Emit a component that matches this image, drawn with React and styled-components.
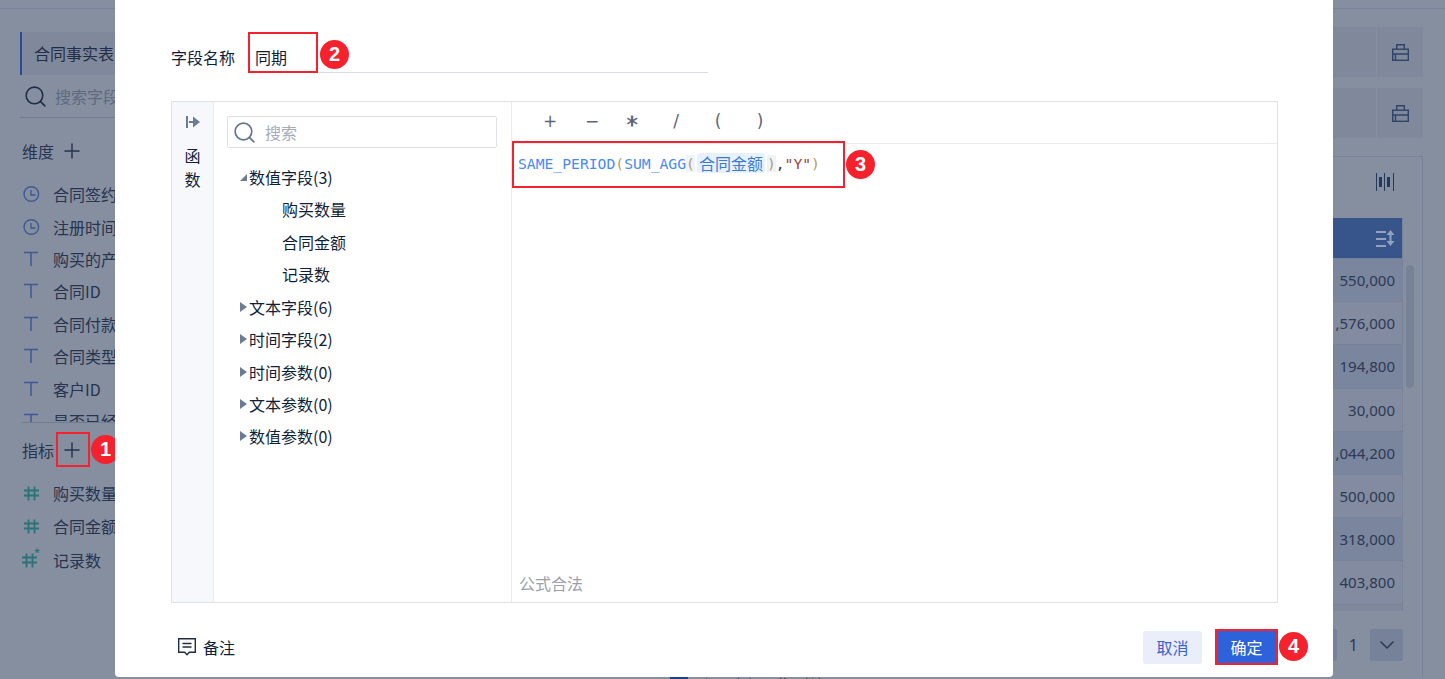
import React from "react";
import styled, { createGlobalStyle } from "styled-components";
import { Plus, Search, ChevronDown } from "lucide-react";

const GlobalStyle = createGlobalStyle`
  html, body { margin: 0; padding: 0; height: 100%; overflow: hidden; }
  body { font-family: "Noto Sans CJK SC", "Noto Sans", sans-serif; font-size: 16px; color: #1f2d46; }
  #root { height: 100%; }
`;

const dims = [
  ["clock", "合同签约时间"],
  ["clock", "注册时间"],
  ["text", "购买的产品"],
  ["text", "合同ID"],
  ["text", "合同付款类型"],
  ["text", "合同类型"],
  ["text", "客户ID"],
  ["text", "是否已经续约"],
];
const measures = [["hash", "购买数量"], ["hash", "合同金额"], ["calc", "记录数"]];
const amounts = ["550,000", "1,576,000", "194,800", "30,000", "1,044,200", "500,000", "318,000", "403,800"];
const closedGroups = ["文本字段(6)", "时间字段(2)", "时间参数(0)", "文本参数(0)", "数值参数(0)"];
const ops = ["+", "−", "⚹", "/", "(", ")"];

const ToolIcon = () => (
  <svg width="17" height="17" viewBox="0 0 17 17" fill="none" stroke="#2f4468" strokeWidth="1.4">
    <rect x="0.7" y="5.2" width="15.6" height="11.1" />
    <path d="M4.700 5.200V0.700h7.600v4.500M0.700 10h15.600M3.500 10v6.300" />
  </svg>
);

const Bars = () => (
  <svg width="18" height="18" viewBox="0 0 18 18" fill="#24395e">
    <rect x="0" y="0" width="1" height="18" />
    <rect x="3" y="4" width="3" height="10" />
    <rect x="8" y="0" width="1" height="18" />
    <rect x="11" y="4" width="3" height="10" />
    <rect x="17" y="0" width="1" height="18" />
  </svg>
);

const SortIcon = () => (
  <svg width="20" height="18" viewBox="0 0 20 18" fill="none" stroke="#93a3bd" strokeWidth="2">
    <path d="M1 3h10M1 10h10M1 17h10M15.500 3v12" />
    <path d="M11.500 6l4-5 4 5zM11.500 12l4 5 4-5z" fill="#93a3bd" stroke="none" />
  </svg>
);

const FunctionToggle = () => (
  <svg width="14" height="14" viewBox="0 0 14 14" fill="#6b7c93">
    <rect x="0" y="1" width="2" height="12" />
    <path d="M3 6h4V1.500L14 7l-7 5.500V8H3z" />
  </svg>
);

const NoteIcon = () => (
  <svg width="18" height="18" viewBox="0 0 18 18" fill="none" stroke="#1f2d46" strokeWidth="1.4">
    <path d="M0.700 0.700h16.600v13.600h-6L9 16.800l-2.300-2.500H0.700z" />
    <path d="M4.500 5.500h9M4.500 9h9" />
  </svg>
);

const FieldIcon = ({ kind }) => {
  if (kind === "clock") {
    return (
      <svg width="18" height="18" viewBox="0 0 18 18" fill="none" stroke="#3d5a94" strokeWidth="1.400">
        <circle cx="9.300" cy="9" r="7.300" />
        <path d="M9 5v5h4.500" />
      </svg>
    );
  }
  if (kind === "text") {
    return (
      <svg width="18" height="18" viewBox="0 0 18 18" fill="none" stroke="#3d5a94" strokeWidth="1.500">
        <path d="M2 2.500h14M9 2.500v13.500" />
      </svg>
    );
  }
  return (
    <HashWrap $shift={kind === "calc" ? -2 : 0}>
      <svg width="18" height="18" viewBox="0 0 18 18" fill="none" stroke="#2a7376" strokeWidth="1.800">
        <path d="M2 6.500h15M2 11.500h15M6.500 2.500v14M12.500 2.500v14" />
      </svg>
      {kind === "calc" && <Star>*</Star>}
    </HashWrap>
  );
};

export default function App() {
  return (
    <>
      <GlobalStyle />
      <Page>
        <TopLine />
        <Body>
          <Sidebar>
            <TableName>合同事实表</TableName>
            <FieldSearch>
              <Search size={25} color="#1f2d46" strokeWidth={1.5} />
              <span>搜索字段</span>
            </FieldSearch>
            <SectionTitle>
              维度 <Plus size={24} strokeWidth={1.5} />
            </SectionTitle>
            <FieldList $height={244} $bordered>
              {dims.map(([kind, name]) => (
                <FieldRow key={name} $h={32.4}>
                  <FieldIcon kind={kind} />
                  <span>{name}</span>
                </FieldRow>
              ))}
            </FieldList>
            <MeasureTitle>
              指标
              <PlusBox>
                <Plus size={24} strokeWidth={1.5} />
                <Marked />
              </PlusBox>
              <Badge $left={69} $top={3}>1</Badge>
            </MeasureTitle>
            <FieldList>
              {measures.map(([kind, name]) => (
                <FieldRow key={name} $h={33.5}>
                  <FieldIcon kind={kind} />
                  <span>{name}</span>
                </FieldRow>
              ))}
            </FieldList>
          </Sidebar>

          <Main>
            <ToolCard>
              <ToolCell><ToolIcon /></ToolCell>
            </ToolCard>
            <ToolCard>
              <ToolCell><ToolIcon /></ToolCell>
            </ToolCard>
            <ChartPanel>
              <ChartTop><Bars /></ChartTop>
              <TableWrap>
                <TableHead><SortIcon /></TableHead>
                {amounts.map((a, i) => (
                  <TableRow key={a} $alt={i % 2 === 0}>{a}</TableRow>
                ))}
                <ScrollThumb />
              </TableWrap>
              <Pager>
                <PagerButton />
                <span>1</span>
                <PagerButton><ChevronDown size={24} strokeWidth={1.6} /></PagerButton>
              </Pager>
            </ChartPanel>
          </Main>
        </Body>
        <Legend>
          <LegendBox />
          <span>合同金额同期对比</span>
        </Legend>

        <Modal>
          <NameRow>
            <NameLabel>字段名称</NameLabel>
            <NameInput>
              <NameValue>
                同期
                <Marked />
                <Badge $left={72} $top={8}>2</Badge>
              </NameValue>
            </NameInput>
          </NameRow>

          <Editor>
            <FuncRail>
              <FunctionToggle />
              <FuncLabel>函<br />数</FuncLabel>
            </FuncRail>
            <FieldPane>
              <TreeSearch>
                <Search size={25} color="#62758f" strokeWidth={1.6} />
                <span>搜索</span>
              </TreeSearch>
              <Tree>
                <TreeRow><Arrow $open />数值字段(3)</TreeRow>
                <TreeLeaf>购买数量</TreeLeaf>
                <TreeLeaf>合同金额</TreeLeaf>
                <TreeLeaf>记录数</TreeLeaf>
                {closedGroups.map((g) => (
                  <TreeRow key={g}><Arrow />{g}</TreeRow>
                ))}
              </Tree>
            </FieldPane>
            <FormulaPane>
              <OpBar>
                {ops.map((o) => (
                  <Op key={o} $star={o === "⚹"}>{o}</Op>
                ))}
              </OpBar>
              <Formula>
                <Fn>SAME_PERIOD</Fn>
                <Paren>(</Paren>
                <Fn>SUM_AGG</Fn>
                <Paren $hl>(</Paren>
                <Chip>合同金额</Chip>
                <Paren $hl>)</Paren>
                <span>,</span>
                <Str>"Y"</Str>
                <Paren>)</Paren>
                <FormulaMark />
                <Badge $left={334} $top={6}>3</Badge>
              </Formula>
              <Valid>公式合法</Valid>
            </FormulaPane>
          </Editor>

          <Footer>
            <NoteLink><NoteIcon />备注</NoteLink>
            <Actions>
              <CancelButton>取消</CancelButton>
              <ConfirmButton>
                确定
                <Badge $left={62} $top={1}>4</Badge>
              </ConfirmButton>
            </Actions>
          </Footer>
        </Modal>
      </Page>
    </>
  );
}

const Page = styled.div`
  position: relative;
  height: 679px;
  background: #868fa0;
  overflow: hidden;
`;

const TopLine = styled.div`
  height: 9px;
  box-sizing: border-box;
  border-bottom: 1px solid #78839a;
`;

const Body = styled.div`
  display: flex;
  justify-content: space-between;
  height: 668px;
`;

const Legend = styled.div`
  display: flex;
  gap: 10px;
  padding-left: 670px;
  color: #26344f;
  line-height: 16px;
`;

const LegendBox = styled.span`
  width: 18px;
  height: 18px;
  flex: none;
  background: #1f3f8f;
`;

const Sidebar = styled.div`
  width: 300px;
  padding: 23px 0 0 20px;
  box-sizing: border-box;
`;

const TableName = styled.div`
  height: 43px;
  line-height: 42px;
  background: #7f899b;
  border-left: 2px solid #2a4a94;
  padding-left: 12px;
  color: #1f2d46;
`;

const FieldSearch = styled.div`
  display: flex;
  align-items: center;
  gap: 7px;
  height: 42px;
  padding-left: 3px;
  border-bottom: 1px solid #717c90;
  color: #5e6a80;
`;

const SectionTitle = styled.div`
  display: flex;
  align-items: center;
  gap: 6px;
  margin: 21px 0 0 2px;
  height: 24px;
  color: #26344f;
`;

const FieldList = styled.div`
  margin: ${(p) => (p.$bordered ? "15px" : "9px")} 0 0 2px;
  height: ${(p) => (p.$height ? `${p.$height}px` : "auto")};
  overflow: hidden;
  border-bottom: ${(p) => (p.$bordered ? "1px solid #717c90" : "none")};
`;

const FieldRow = styled.div`
  display: flex;
  align-items: center;
  gap: 13px;
  height: ${(p) => p.$h}px;
  color: #26344f;
  white-space: nowrap;
`;

const HashWrap = styled.span`
  position: relative;
  display: inline-flex;
  transform: translateX(${(p) => p.$shift}px);
`;

const Star = styled.span`
  position: absolute;
  right: -2px;
  top: -7px;
  font-size: 12px;
  font-weight: 700;
  color: #2a7376;
`;

const MeasureTitle = styled.div`
  position: relative;
  display: flex;
  align-items: center;
  gap: 2px;
  margin: 9px 0 0 2px;
  height: 35px;
  color: #26344f;
`;

const PlusBox = styled.span`
  position: relative;
  width: 34px;
  height: 35px;
  padding-right: 2px;
  box-sizing: border-box;
  display: flex;
  align-items: center;
  justify-content: center;
`;

const Marked = styled.span`
  position: absolute;
  inset: 0;
  border: 2px solid #f5222d;
  box-sizing: border-box;
  pointer-events: none;
`;

const Badge = styled.span`
  position: absolute;
  left: ${(p) => p.$left}px;
  top: ${(p) => p.$top}px;
  width: 29px;
  height: 29px;
  border-radius: 50%;
  background: #f5222d;
  color: #fff;
  font-family: "Liberation Sans", Arial, sans-serif;
  font-size: 20px;
  font-weight: 700;
  line-height: 29px;
  text-align: center;
`;

const Main = styled.div`
  width: 300px;
  padding: 18px 22px 0 0;
  box-sizing: border-box;
`;

const ToolCard = styled.div`
  height: 50px;
  margin-bottom: 11px;
  background: #7f899b;
  display: flex;
  justify-content: flex-end;
`;

const ToolCell = styled.div`
  width: 47px;
  border-left: 1px solid #868fa0;
  box-sizing: border-box;
  display: flex;
  align-items: center;
  justify-content: center;
`;

const ChartPanel = styled.div`
  height: 520px;
  margin-top: 18px;
  padding-right: 19px;
  border-top: 1px solid #78839a;
  border-right: 1px solid #78839a;
`;

const ChartTop = styled.div`
  height: 61px;
  box-sizing: border-box;
  display: flex;
  justify-content: flex-end;
  align-items: flex-start;
  padding: 16px 9px 0 0;
`;

const TableWrap = styled.div`
  position: relative;
  border-right: 1px solid #78839a;
  padding-bottom: 6px;
  background: #7f899b;
`;

const TableHead = styled.div`
  height: 41px;
  box-sizing: border-box;
  border-bottom: 1px solid #78839a;
  background: #38558b;
  display: flex;
  align-items: center;
  justify-content: flex-end;
  padding-right: 7px;
`;

const TableRow = styled.div`
  height: 43.2px;
  box-sizing: border-box;
  border-bottom: 1px solid #78839a;
  background: ${(p) => (p.$alt ? "#7a859e" : "#828b9f")};
  display: flex;
  align-items: center;
  justify-content: flex-end;
  padding-right: 7px;
  color: #2c3a54;
  font-family: "Noto Sans", sans-serif;
  font-size: 15px;
`;

const ScrollThumb = styled.div`
  position: absolute;
  right: -12px;
  top: 47px;
  width: 8px;
  height: 123px;
  border-radius: 4px;
  background: #788296;
`;

const Pager = styled.div`
  display: flex;
  justify-content: flex-end;
  align-items: center;
  gap: 12px;
  margin-top: 18px;
  color: #2c3a54;
  font-family: "Noto Sans", sans-serif;
`;

const PagerButton = styled.span`
  width: 33px;
  height: 32px;
  background: #76819a;
  border-radius: 2px;
  display: flex;
  align-items: center;
  justify-content: center;
`;

const Modal = styled.div`
  position: absolute;
  left: 115px;
  top: 0;
  width: 1218px;
  height: 677px;
  background: #fff;
  border-radius: 0 0 4px 4px;
  box-sizing: border-box;
  padding: 0 55px 0 56px;
  display: flex;
  flex-direction: column;
  color: #0f1e3a;
`;

const NameRow = styled.div`
  display: flex;
  align-items: flex-end;
  height: 73px;
  gap: 13px;
`;

const NameLabel = styled.span`
  line-height: 30px;
  margin-bottom: 1px;
`;

const NameInput = styled.div`
  width: 460px;
  height: 41px;
  border-bottom: 1px solid #d8dbe4;
  box-sizing: border-box;
`;

const NameValue = styled.div`
  position: relative;
  width: 70px;
  height: 41px;
  box-sizing: border-box;
  padding: 13px 0 0 7px;
  line-height: 24px;
`;

const Editor = styled.div`
  display: flex;
  height: 502px;
  margin-top: 28px;
  border: 1px solid #dfe1e9;
  box-sizing: border-box;
`;

const FuncRail = styled.div`
  width: 42px;
  flex: none;
  background: #f6f8fc;
  border-right: 1px solid #e9ebf1;
  display: flex;
  flex-direction: column;
  align-items: center;
  padding-top: 13px;
  box-sizing: border-box;
`;

const FuncLabel = styled.div`
  margin-top: 14px;
  line-height: 24px;
`;

const FieldPane = styled.div`
  width: 298px;
  flex: none;
  border-right: 1px solid #e9ebf1;
  box-sizing: border-box;
  padding: 14px 14px 0 13px;
`;

const TreeSearch = styled.div`
  display: flex;
  align-items: center;
  gap: 8px;
  height: 30px;
  border: 1px solid #dfe1e9;
  border-radius: 2px;
  padding-left: 4px;
  color: #a4acba;
`;

const Tree = styled.div`
  margin-top: 13px;
`;

const TreeRow = styled.div`
  display: flex;
  align-items: center;
  height: 32.4px;
  padding-left: 13px;
`;

const TreeLeaf = styled.div`
  height: 32.4px;
  line-height: 32.4px;
  padding-left: 55px;
`;

const Arrow = styled.span`
  width: 0;
  height: 0;
  margin-right: 2px;
  ${(p) =>
    p.$open
      ? `border-left: 7px solid transparent; border-bottom: 7px solid #6b7c93;`
      : `border-top: 5px solid transparent; border-bottom: 5px solid transparent; border-left: 7px solid #6b7c93;`}
`;

const FormulaPane = styled.div`
  flex: 1;
  display: flex;
  flex-direction: column;
  min-width: 0;
`;

const OpBar = styled.div`
  height: 42px;
  box-sizing: border-box;
  border-bottom: 1px solid #e9ebf1;
  display: flex;
  align-items: center;
  padding: 0 0 3px 17px;
`;

const Op = styled.span`
  display: inline-block;
  width: 42px;
  text-align: center;
  color: #5c6675;
  font-family: "DejaVu Sans", sans-serif;
  font-size: ${(p) => (p.$star ? "20px" : "17px")};
  transform: ${(p) => (p.$star ? "rotate(90deg)" : "none")};
`;

const Formula = styled.div`
  position: relative;
  display: flex;
  align-items: center;
  height: 38px;
  width: 333px;
  padding-left: 6px;
  box-sizing: border-box;
  font-family: "DejaVu Sans Mono", monospace;
  font-size: 14.7px;
  color: #333;
`;

const FormulaMark = styled(Marked)`
  inset: -3px 0 -6px 0;
`;

const Fn = styled.span`
  color: #4a8af4;
`;

const Paren = styled.span`
  color: #b59a6a;
  background: ${(p) => (p.$hl ? "#edf4fc" : "transparent")};
`;

const Chip = styled.span`
  background: #e8f2fd;
  border-radius: 3px;
  color: #3a7bd5;
  font-family: "Noto Sans CJK SC", sans-serif;
  font-size: 16px;
  line-height: 20px;
  padding: 0 2px;
  margin: 0 2px;
`;

const Str = styled.span`
  color: #a33a3a;
`;

const Valid = styled.div`
  margin-top: auto;
  padding: 0 0 7px 7px;
  color: #9aa0ab;
`;

const Footer = styled.div`
  flex: 1;
  display: flex;
  align-items: center;
  justify-content: space-between;
  padding-top: 14px;
`;

const NoteLink = styled.div`
  display: flex;
  align-items: center;
  gap: 7px;
  padding-left: 7px;
`;

const Actions = styled.div`
  display: flex;
  align-items: center;
  gap: 13px;
`;

const CancelButton = styled.div`
  width: 59px;
  height: 33px;
  line-height: 33px;
  text-align: center;
  border-radius: 3px;
  background: #e9eefa;
  color: #3b5fd9;
`;

const ConfirmButton = styled.div`
  position: relative;
  width: 63px;
  height: 36px;
  line-height: 32px;
  text-align: center;
  background: #2e62db;
  border: 2px solid #f5222d;
  box-sizing: border-box;
  color: #fff;
`;
